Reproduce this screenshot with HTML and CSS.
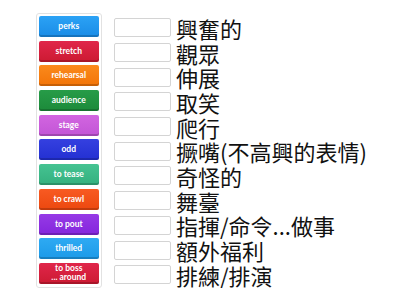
FILE: index.html
```html
<!DOCTYPE html>
<html lang="en">
<head>
  <meta charset="UTF-8" />
  <title>Match up</title>
  <link rel="stylesheet" href="styles.css">
</head>
<body>
  <div class="game">
    <!-- Word tiles -->
    <div class="tiles">
      <div class="tile blue">perks</div>
      <div class="tile red">stretch</div>
      <div class="tile orange">rehearsal</div>
      <div class="tile green">audience</div>
      <div class="tile orchid">stage</div>
      <div class="tile navy">odd</div>
      <div class="tile teal">to tease</div>
      <div class="tile flame">to crawl</div>
      <div class="tile violet">to pout</div>
      <div class="tile sky">thrilled</div>
      <div class="tile red two">to boss<br>... around</div>
    </div>

    <!-- Answer slots -->
    <div class="answers">
      <div class="row"><div class="slot"></div><span class="def">興奮的</span></div>
      <div class="row"><div class="slot"></div><span class="def">觀眾</span></div>
      <div class="row"><div class="slot"></div><span class="def">伸展</span></div>
      <div class="row"><div class="slot"></div><span class="def">取笑</span></div>
      <div class="row"><div class="slot"></div><span class="def">爬行</span></div>
      <div class="row"><div class="slot"></div><span class="def">撅嘴(不高興的表情)</span></div>
      <div class="row"><div class="slot"></div><span class="def">奇怪的</span></div>
      <div class="row"><div class="slot"></div><span class="def">舞臺</span></div>
      <div class="row"><div class="slot"></div><span class="def">指揮/命令...做事</span></div>
      <div class="row"><div class="slot"></div><span class="def">額外福利</span></div>
      <div class="row"><div class="slot"></div><span class="def">排練/排演</span></div>
    </div>
  </div>
</body>
</html>
```

FILE: styles.css
```css
body {
  margin: 0;
  background: #fff;
  font-family: "Noto Sans CJK TC", "Noto Sans", sans-serif;
}

.game {
  display: flex;
  align-items: flex-start;
  padding: 12.5px 0 0 35.5px;
}

.tiles {
  display: flex;
  flex-direction: column;
  gap: 3.7px;
  width: 59.5px;
  padding: 2.5px 2.5px 3px;
  background: #fff;
  border: 1px solid #e2e2e2;
  border-radius: 3px;
}

.tile {
  height: 21px;
  display: flex;
  align-items: center;
  justify-content: center;
  text-align: center;
  color: #fff;
  font-family: Lato, "Open Sans", sans-serif;
  font-weight: bold;
  font-size: 8.5px;
  line-height: 9px;
  border-radius: 2px;
  box-shadow: inset 0 -2px 0 rgba(0,0,0,0.18);
}

.blue   { background: linear-gradient(#2ba2f5, #1a8ce6); }
.red    { background: linear-gradient(#e0264a, #cc1a32); }
.orange { background: linear-gradient(#fb8a1c, #f27408); }
.green  { background: linear-gradient(#279c48, #1c8a3a); }
.orchid { background: linear-gradient(#d265e0, #c255d6); }
.navy   { background: linear-gradient(#3540e0, #2330d2); }
.teal   { background: linear-gradient(#45c392, #34b07e); }
.flame  { background: linear-gradient(#f85a22, #ec480f); }
.violet { background: linear-gradient(#963ae6, #8426dc); }
.sky    { background: linear-gradient(#2eaaf3, #1c9ae8); }

.answers {
  display: flex;
  flex-direction: column;
  margin-left: 12px;
  padding-top: 3px;
}

.row {
  display: flex;
  align-items: center;
  height: 24.7px;
}

.slot {
  width: 55px;
  height: 17px;
  border: 1px solid #d4d4d4;
  border-radius: 2px;
  background: #fff;
  flex-shrink: 0;
}

.def {
  margin-left: 5px;
  font-size: 22px;
  line-height: 22px;
  color: #111;
  white-space: nowrap;
}
```
